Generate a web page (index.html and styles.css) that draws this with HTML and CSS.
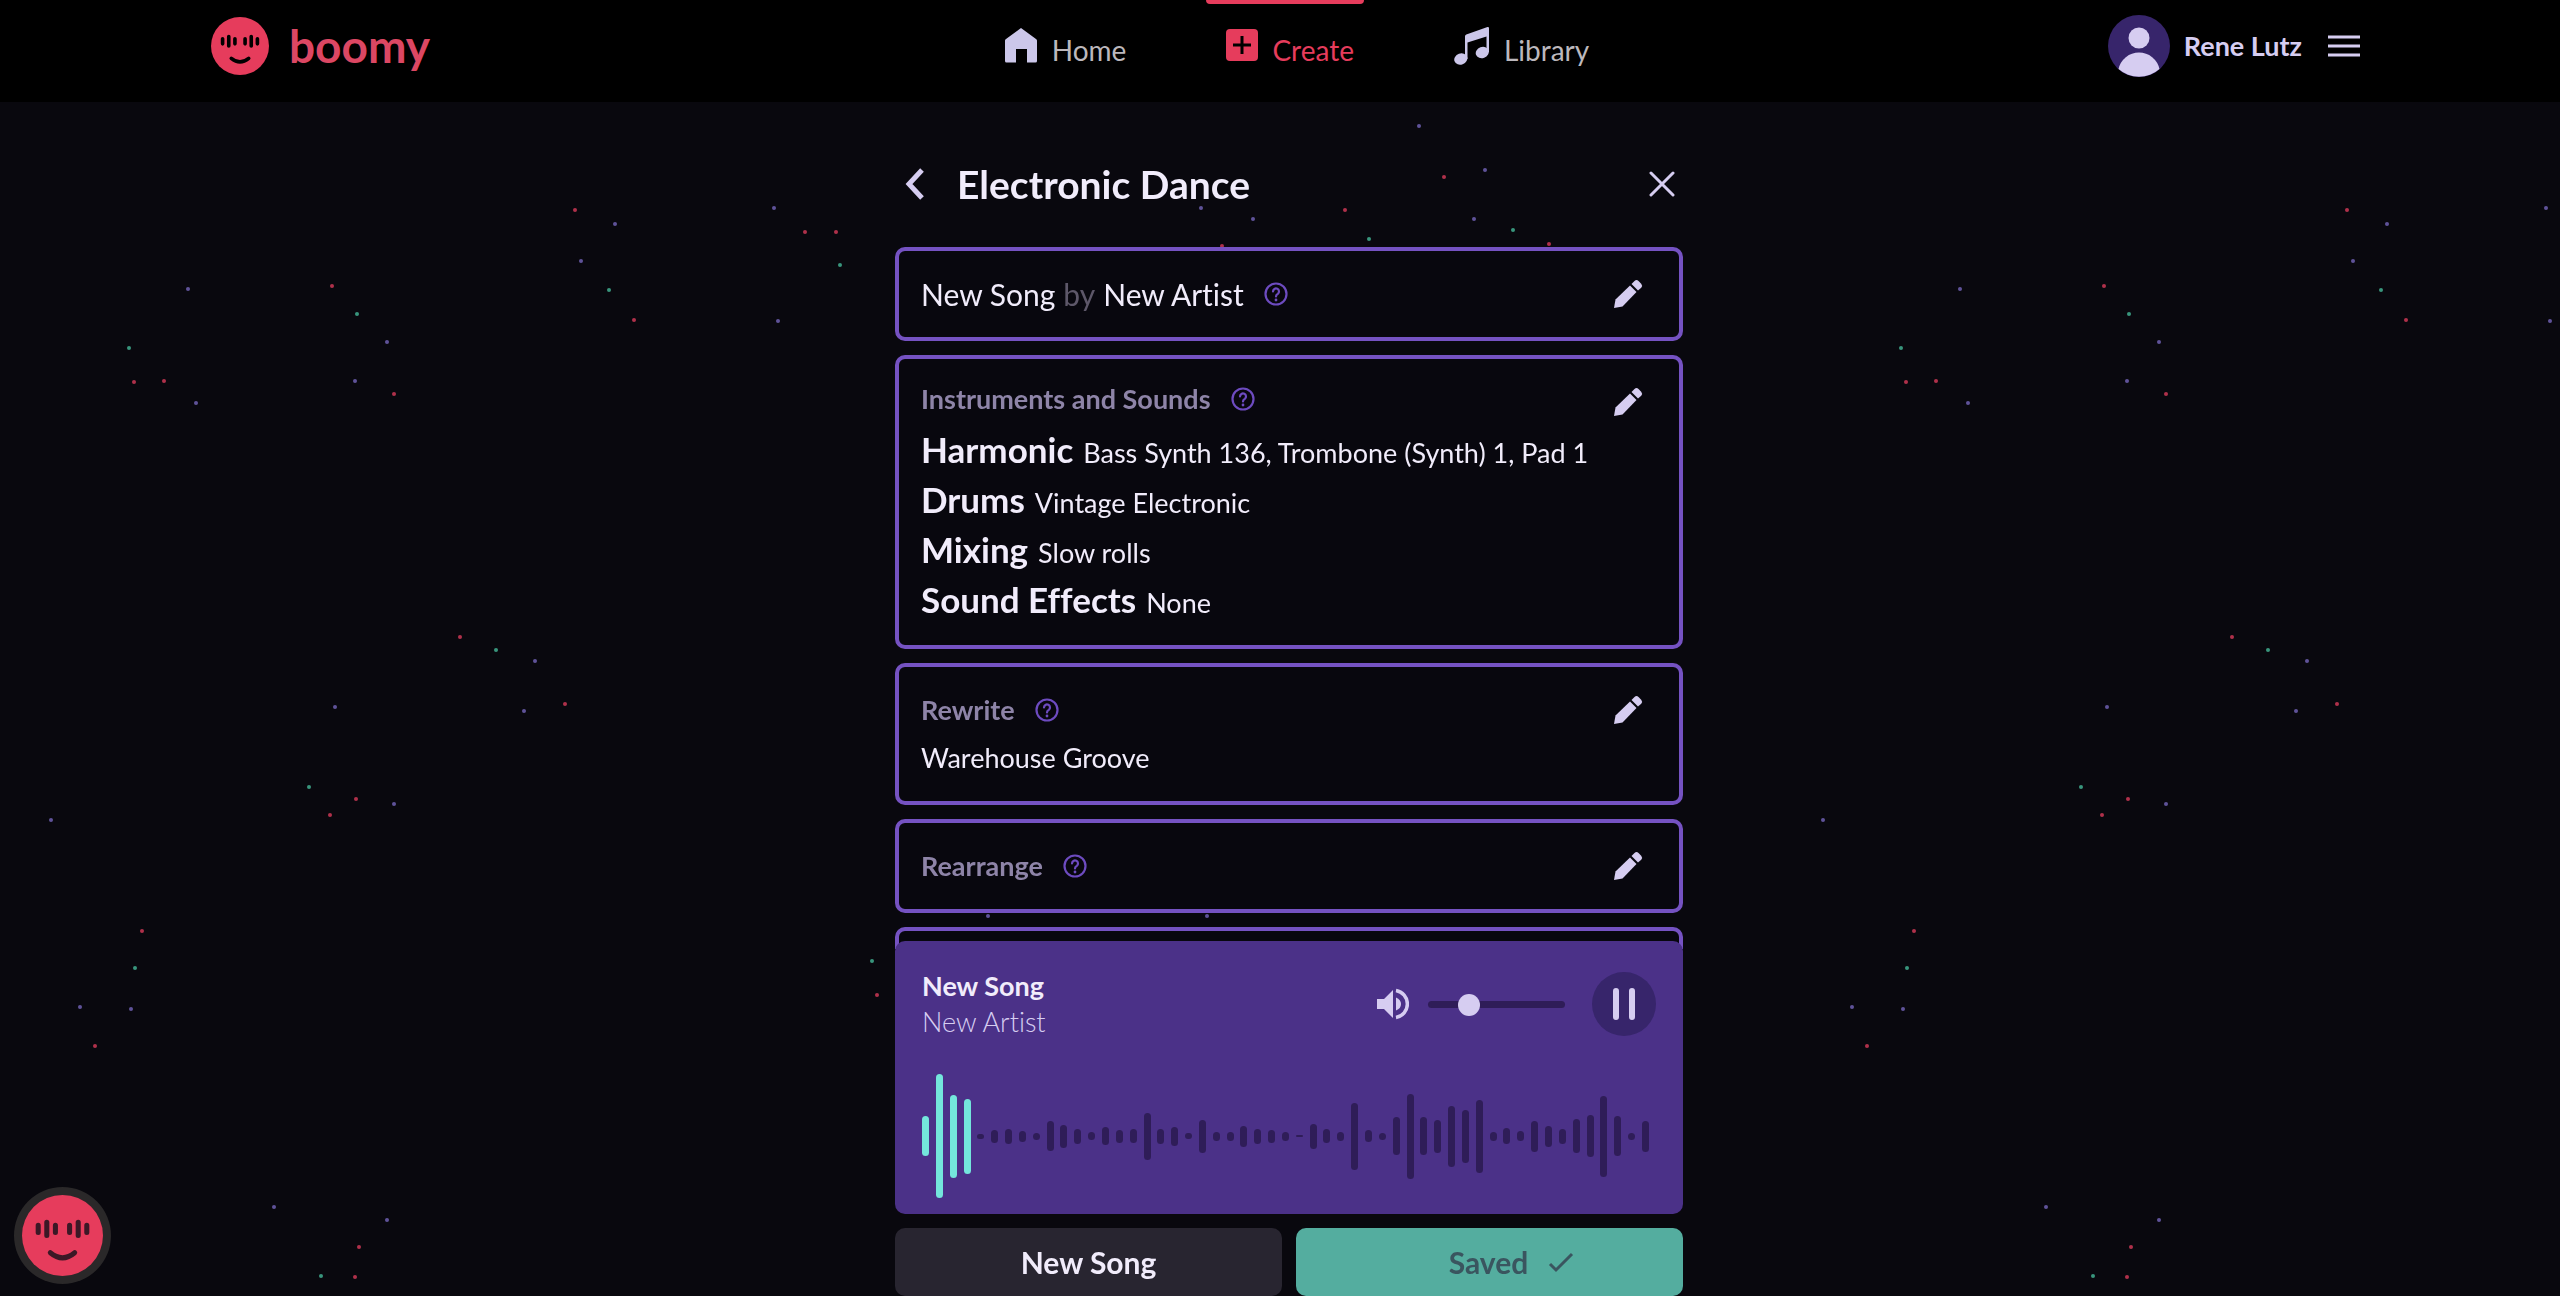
FILE: index.html
```
<!DOCTYPE html>
<html lang="en">
<head>
    <meta charset="UTF-8">
    <meta name="viewport" content="width=device-width, initial-scale=1">
    <title>Boomy - Create</title>
    <link rel="stylesheet" href="styles.css">
</head>
<body>
    <!-- shared shapes -->
    <svg class="sprite" aria-hidden="true">
        <symbol id="face" viewBox="0 0 80 80">
            <circle cx="40" cy="40" r="40" fill="#e63c5c"/>
            <g stroke="currentColor" stroke-width="5" stroke-linecap="round" fill="none">
                <path d="M16 30v7M24.500 27v13M33 30v7M47 30v7M55.500 27v13M64 30v7"/>
                <path d="M28 57q12 10 24 0"/>
            </g>
        </symbol>
        <symbol id="pencil" viewBox="-5 -4 38 36">
            <path fill="currentColor" d="M0 28L1.500 19.500 16 5.500 22.500 12 8.500 26.500z"/>
            <path fill="currentColor" d="M17.500 4L20.500 1a3 3 0 0 1 4 0l2.700 2.700a3 3 0 0 1 0 4L24 10.500z"/>
        </symbol>
        <symbol id="help" viewBox="0 0 24 24">
            <g fill="none" stroke="currentColor" stroke-width="2.200" stroke-linecap="round">
                <circle cx="12" cy="12" r="10.500"/>
                <path d="M9 9.500a3 3 0 1 1 4.800 2.400c-1.200.8-1.800 1.300-1.800 2.500"/>
            </g>
            <circle cx="12" cy="18" r="1.400" fill="currentColor"/>
        </symbol>
    </svg>

    <svg class="stars" aria-hidden="true">
        <defs>
            <pattern id="sky" width="1772" height="1296" patternUnits="userSpaceOnUse">
                <g fill="#b0304a">
                    <circle cx="575" cy="210" r="2"/><circle cx="634" cy="320" r="2"/><circle cx="805" cy="232" r="2"/>
                    <circle cx="836" cy="232" r="2"/><circle cx="332" cy="286" r="2"/><circle cx="134" cy="382" r="2"/>
                    <circle cx="164" cy="381" r="2"/><circle cx="394" cy="394" r="2"/><circle cx="460" cy="637" r="2"/>
                    <circle cx="565" cy="704" r="2"/><circle cx="330" cy="815" r="2"/><circle cx="356" cy="799" r="2"/>
                    <circle cx="142" cy="931" r="2"/><circle cx="95" cy="1046" r="2"/><circle cx="359" cy="1247" r="2"/>
                    <circle cx="355" cy="1277" r="2"/><circle cx="877" cy="995" r="2"/><circle cx="1444" cy="177" r="2"/>
                    <circle cx="1345" cy="210" r="2"/><circle cx="1222" cy="246" r="2"/><circle cx="1549" cy="244" r="2"/>
                </g>
                <g fill="#5f5299">
                    <circle cx="615" cy="224" r="2"/><circle cx="581" cy="261" r="2"/><circle cx="774" cy="208" r="2"/>
                    <circle cx="778" cy="321" r="2"/><circle cx="188" cy="289" r="2"/><circle cx="387" cy="342" r="2"/>
                    <circle cx="355" cy="381" r="2"/><circle cx="196" cy="403" r="2"/><circle cx="535" cy="661" r="2"/>
                    <circle cx="524" cy="711" r="2"/><circle cx="335" cy="707" r="2"/><circle cx="51" cy="820" r="2"/>
                    <circle cx="394" cy="804" r="2"/><circle cx="80" cy="1007" r="2"/><circle cx="131" cy="1009" r="2"/>
                    <circle cx="274" cy="1207" r="2"/><circle cx="387" cy="1220" r="2"/><circle cx="988" cy="916" r="2"/>
                    <circle cx="1207" cy="916" r="2"/><circle cx="1419" cy="126" r="2"/><circle cx="1485" cy="170" r="2"/>
                    <circle cx="1201" cy="208" r="2"/><circle cx="1253" cy="219" r="2"/><circle cx="1474" cy="219" r="2"/>
                </g>
                <g fill="#38957c">
                    <circle cx="609" cy="290" r="2"/><circle cx="357" cy="314" r="2"/><circle cx="129" cy="348" r="2"/>
                    <circle cx="840" cy="265" r="2"/><circle cx="496" cy="650" r="2"/><circle cx="309" cy="787" r="2"/>
                    <circle cx="135" cy="968" r="2"/><circle cx="321" cy="1276" r="2"/><circle cx="872" cy="961" r="2"/>
                    <circle cx="1369" cy="239" r="2"/><circle cx="1513" cy="230" r="2"/>
                </g>
            </pattern>
        </defs>
        <rect width="100%" height="100%" fill="url(#sky)"/>
    </svg>

    <div class="app">
        <header class="topbar">
            <a class="logo" href="#">
                <svg class="logo-face" aria-hidden="true"><use href="#face"/></svg>
                <span>boomy</span>
            </a>

            <nav class="nav">
                <a class="nav-link" href="#">
                    <svg width="34" height="38" viewBox="0 0 34 38" aria-hidden="true">
                        <path fill="currentColor" d="M17 1L32 12a2 2 0 0 1 1 2v20a1.500 1.500 0 0 1-1.500 1.500H23V22H12v13.500H2.500A1.500 1.500 0 0 1 1 34V14a2 2 0 0 1 1-2z"/>
                    </svg>
                    <span>Home</span>
                </a>
                <a class="nav-link active" href="#">
                    <svg width="32" height="38" viewBox="0 0 32 38" aria-hidden="true">
                        <rect y="2" width="32" height="32" rx="4" fill="currentColor"/>
                        <path d="M16 9v18M7 18h18" stroke="#000" stroke-width="3"/>
                    </svg>
                    <span>Create</span>
                </a>
                <a class="nav-link" href="#">
                    <svg width="36" height="38" viewBox="0 0 36 38" aria-hidden="true">
                        <path fill="currentColor" d="M11 9.500a2 2 0 0 1 1.300-1.900L33.500.1a1.200 1.200 0 0 1 1.500 1.100V25h-2.500V9.500L13.500 15.500V32H11z"/>
                        <ellipse cx="6.800" cy="32" rx="6.700" ry="5.500" transform="rotate(-20 6.800 32)" fill="currentColor"/>
                        <ellipse cx="28.300" cy="25.500" rx="6.700" ry="5.500" transform="rotate(-20 28.300 25.500)" fill="currentColor"/>
                    </svg>
                    <span>Library</span>
                </a>
            </nav>

            <div class="user">
                <svg class="avatar" viewBox="0 0 62 62" aria-hidden="true">
                    <circle cx="31" cy="31" r="31" fill="#37256b"/>
                    <circle cx="31" cy="23" r="10.500" fill="#d6cdf1"/>
                    <path d="M10.500 54a21 21 0 0 1 41 0a31 31 0 0 1-41 0z" fill="#d6cdf1"/>
                </svg>
                <span class="user-name">Rene Lutz</span>
                <button class="icon-btn" type="button" aria-label="Menu">
                    <svg width="32" height="22" viewBox="0 0 32 22"><path d="M0 2h32M0 11h32M0 20h32" stroke="currentColor" stroke-width="3"/></svg>
                </button>
            </div>
        </header>

        <main class="studio">
            <div class="title-row">
                <button class="icon-btn" type="button" aria-label="Back">
                    <svg width="22" height="32" viewBox="0 0 22 32"><path d="M18 2L5 16l13 14" fill="none" stroke="currentColor" stroke-width="5"/></svg>
                </button>
                <h1>Electronic Dance</h1>
                <button class="icon-btn" type="button" aria-label="Close">
                    <svg width="26" height="26" viewBox="0 0 26 26"><path d="M2 2l22 22M24 2L2 24" stroke="currentColor" stroke-width="3" stroke-linecap="round"/></svg>
                </button>
            </div>

            <div class="cards">
                <section class="card">
                    <div class="card-body">
                        <p class="song">New Song <span class="by">by</span> New Artist
                            <button class="help" type="button" aria-label="About song name"><svg><use href="#help"/></svg></button>
                        </p>
                    </div>
                    <button class="icon-btn edit" type="button" aria-label="Edit song name"><svg><use href="#pencil"/></svg></button>
                </section>

                <section class="card sounds">
                    <div class="card-body">
                        <h2>Instruments and Sounds
                            <button class="help" type="button" aria-label="About instruments"><svg><use href="#help"/></svg></button>
                        </h2>
                        <dl>
                            <div class="sound"><dt>Harmonic</dt><dd>Bass Synth 136, Trombone (Synth) 1, Pad 1</dd></div>
                            <div class="sound"><dt>Drums</dt><dd>Vintage Electronic</dd></div>
                            <div class="sound"><dt>Mixing</dt><dd>Slow rolls</dd></div>
                            <div class="sound"><dt>Sound Effects</dt><dd>None</dd></div>
                        </dl>
                    </div>
                    <button class="icon-btn edit" type="button" aria-label="Edit instruments"><svg><use href="#pencil"/></svg></button>
                </section>

                <section class="card">
                    <div class="card-body">
                        <h2>Rewrite
                            <button class="help" type="button" aria-label="About rewrite"><svg><use href="#help"/></svg></button>
                        </h2>
                        <p class="value">Warehouse Groove</p>
                    </div>
                    <button class="icon-btn edit" type="button" aria-label="Edit rewrite"><svg><use href="#pencil"/></svg></button>
                </section>

                <section class="card">
                    <div class="card-body">
                        <h2>Rearrange
                            <button class="help" type="button" aria-label="About rearrange"><svg><use href="#help"/></svg></button>
                        </h2>
                    </div>
                    <button class="icon-btn edit" type="button" aria-label="Edit arrangement"><svg><use href="#pencil"/></svg></button>
                </section>

                <section class="card"></section>
            </div>

            <div class="dock">
                <section class="player">
                    <div class="player-top">
                        <div class="track">
                            <p class="track-name">New Song</p>
                            <p class="track-artist">New Artist</p>
                        </div>
                        <label class="volume">
                            <svg width="32" height="32" viewBox="0 0 32 32" role="img" aria-label="Volume">
                                <path d="M0 11h7l9-9v28l-9-9H0z" fill="currentColor"/>
                                <path d="M19 9.500q5 2 5 6.500t-5 6.500z" fill="currentColor"/>
                                <path d="M19 2.500a13.700 13.700 0 0 1 0 27" fill="none" stroke="currentColor" stroke-width="3.500"/>
                            </svg>
                            <input type="range" min="0" max="100" value="26">
                        </label>
                        <button class="pause" type="button" aria-label="Pause">
                            <svg width="22" height="32" viewBox="0 0 22 32"><path d="M3 3v26M19 3v26" stroke="currentColor" stroke-width="6" stroke-linecap="round"/></svg>
                        </button>
                    </div>
                    <div class="wave" id="wave"></div>
                </section>
                <div class="actions">
                    <button class="action" type="button">New Song</button>
                    <button class="action saved" type="button">Saved
                        <svg width="26" height="22" viewBox="0 0 26 22" aria-hidden="true"><path d="M2 13l6 6L24 3" fill="none" stroke="currentColor" stroke-width="3"/></svg>
                    </button>
                </div>
            </div>
        </main>
    </div>

    <button class="chat" type="button" aria-label="Chat">
        <svg><use href="#face"/></svg>
    </button>

    <script src="script.js"></script>
</body>
</html>
```
FILE: styles.css
```
* {
    box-sizing: border-box;
}

body {
    margin: 0;
    background-color: #09080e;
    color: #f1ecfb;
    font-family: Lato, "Open Sans", sans-serif;
    font-size: 27px;
    font-variant-ligatures: none;
    line-height: 36px;
}

h1, h2, p, dl, dd {
    margin: 0;
}

a {
    color: inherit;
    text-decoration: none;
}

button {
    border: 0;
    padding: 0;
    background: none;
    color: inherit;
    font: inherit;
    cursor: pointer;
}

svg {
    display: block;
}

.sprite {
    position: absolute;
    width: 0;
    height: 0;
}

.stars {
    position: fixed;
    inset: 0;
    width: 100%;
    height: 100%;
    z-index: -1;
}

.app {
    display: flex;
    flex-direction: column;
    height: 100vh;
}

/* top bar */
.topbar {
    display: grid;
    grid-template-columns: 1fr auto 1fr;
    align-items: center;
    height: 102px;
    padding: 0 200px 10px 211px;
    background-color: #000;
}

.logo {
    display: flex;
    align-items: center;
    gap: 20px;
    color: #dc4763;
    font-size: 46px;
    font-weight: 700;
}

.logo-face {
    width: 58px;
    height: 58px;
    color: #000;
}

.nav {
    display: flex;
    gap: 70px;
    margin-left: 12px;
}

.nav-link {
    position: relative;
    display: flex;
    align-items: center;
    gap: 14px;
    height: 92px;
    padding: 0 10px 0 20px;
    color: #ccc7ea;
    font-size: 28px;
}

.nav-link span {
    padding-top: 8px;
    color: #bcb8bd;
}

.nav-link.active,
.nav-link.active span {
    color: #e63c5c;
}

.nav-link.active::before {
    content: "";
    position: absolute;
    top: 0;
    left: 0;
    right: 0;
    height: 4px;
    border-radius: 0 0 4px 4px;
    background-color: #e63c5c;
}

.user {
    display: flex;
    align-items: center;
    justify-content: flex-end;
    gap: 14px;
    color: #d6cdf1;
}

.avatar {
    width: 62px;
    height: 62px;
}

.user-name {
    font-weight: 700;
    margin-right: 12px;
}

/* song editor */
.studio {
    display: flex;
    flex-direction: column;
    flex: 1;
    min-height: 0;
    width: 100%;
    max-width: 806px;
    margin: 0 auto;
    padding: 58px 0 0 18px;
}

.title-row {
    display: flex;
    align-items: center;
    gap: 31px;
    padding: 0 8px 0 9px;
    margin-bottom: 39px;
    color: #d6cdf1;
}

h1 {
    flex: 1;
    color: #f1ecfb;
    font-size: 39px;
    line-height: 48px;
}

.cards {
    display: flex;
    flex-direction: column;
    gap: 14px;
    flex: 1;
    min-height: 0;
    margin-bottom: -8px;
    overflow: hidden;
}

.card {
    display: flex;
    flex-shrink: 0;
    min-height: 94px;
    padding: 25px 32px 25px 22px;
    border: 4px solid #7552c2;
    border-radius: 10px;
    background-color: rgba(9, 8, 14, 0.9);
}

.card-body {
    flex: 1;
}

.song {
    display: flex;
    align-items: center;
    gap: 8px;
    font-size: 30px;
    white-space: nowrap;
}

.by {
    color: #5d5769;
}

h2 {
    display: flex;
    align-items: center;
    gap: 20px;
    color: #8e84a8;
    font-size: 27px;
    line-height: 36px;
}

.help {
    color: #6d4bc0;
}

.song .help {
    margin-left: 12px;
}

.help svg {
    width: 24px;
    height: 24px;
}

.edit {
    align-self: flex-start;
    color: #d6cdf1;
}

.edit svg {
    width: 38px;
    height: 36px;
}

.sounds {
    padding-bottom: 21px;
}

.sounds h2 {
    height: 30px;
    margin-bottom: 10px;
}

.sound {
    display: flex;
    align-items: baseline;
    gap: 10px;
    height: 50px;
    line-height: 50px;
}

.sound dt {
    font-size: 35px;
    font-weight: 700;
}

.value {
    margin-top: 12px;
}

/* player and buttons at the bottom */
.dock {
    position: relative;
    display: flex;
    flex-direction: column;
    gap: 14px;
}

.player {
    padding: 27px 27px 16px;
    border-radius: 10px;
    background-color: #4b3188;
}

.player-top {
    display: flex;
    align-items: center;
    gap: 27px;
    margin-bottom: 34px;
}

.track {
    flex: 1;
}

.track-name {
    font-weight: 700;
}

.track-artist {
    color: #d6cdf1;
    font-weight: 300;
}

.volume {
    display: flex;
    align-items: center;
    gap: 19px;
    color: #d6cdf1;
}

.volume input {
    appearance: none;
    width: 137px;
    height: 22px;
    margin: 0;
    background: none;
}

.volume input::-webkit-slider-runnable-track {
    height: 7px;
    border-radius: 4px;
    background-color: #2f1d58;
}

.volume input::-webkit-slider-thumb {
    appearance: none;
    width: 22px;
    height: 22px;
    margin-top: -7px;
    border-radius: 50%;
    background-color: #d6cdf1;
}

.pause {
    display: grid;
    place-items: center;
    width: 64px;
    height: 64px;
    border-radius: 50%;
    background-color: #37256b;
    color: #d6cdf1;
}

.wave {
    display: flex;
    align-items: center;
    justify-content: space-between;
    height: 124px;
    padding-right: 7px;
}

.bar {
    width: 7px;
    border-radius: 4px;
    background-color: #2f1d58;
}

.bar.played {
    background-color: #74e6dc;
}

.actions {
    display: grid;
    grid-template-columns: 1fr 1fr;
    gap: 14px;
}

.action {
    display: flex;
    align-items: center;
    justify-content: center;
    gap: 20px;
    height: 68px;
    border-radius: 10px;
    background-color: #282530;
    font-size: 30px;
    font-weight: 700;
}

.saved {
    padding-left: 44px;
    background-color: #54ad9f;
    color: #3a555f;
}

/* floating chat face */
.chat {
    position: fixed;
    left: 14px;
    bottom: 12px;
    padding: 8px;
    border-radius: 50%;
    background-color: #2a2829;
    color: #3c1826;
}

.chat svg {
    width: 81px;
    height: 81px;
}
```
FILE: script.js
```
// bar heights of the waveform, in pixels
const levels = [
    40, 124, 83, 75, 5, 13, 15, 11, 7, 30, 23, 15, 8, 18, 13, 14, 47, 15,
    19, 6, 33, 9, 9, 21, 15, 13, 9, 2, 25, 14, 9, 67, 12, 7, 38, 85, 38, 33,
    61, 53, 73, 9, 16, 10, 31, 21, 15, 34, 42, 81, 40, 7, 31
];
const played = 4;

const wave = document.getElementById('wave');

levels.forEach((level, i) => {
    const bar = document.createElement('span');
    bar.className = i < played ? 'bar played' : 'bar';
    bar.style.height = level + 'px';
    wave.appendChild(bar);
});
```
